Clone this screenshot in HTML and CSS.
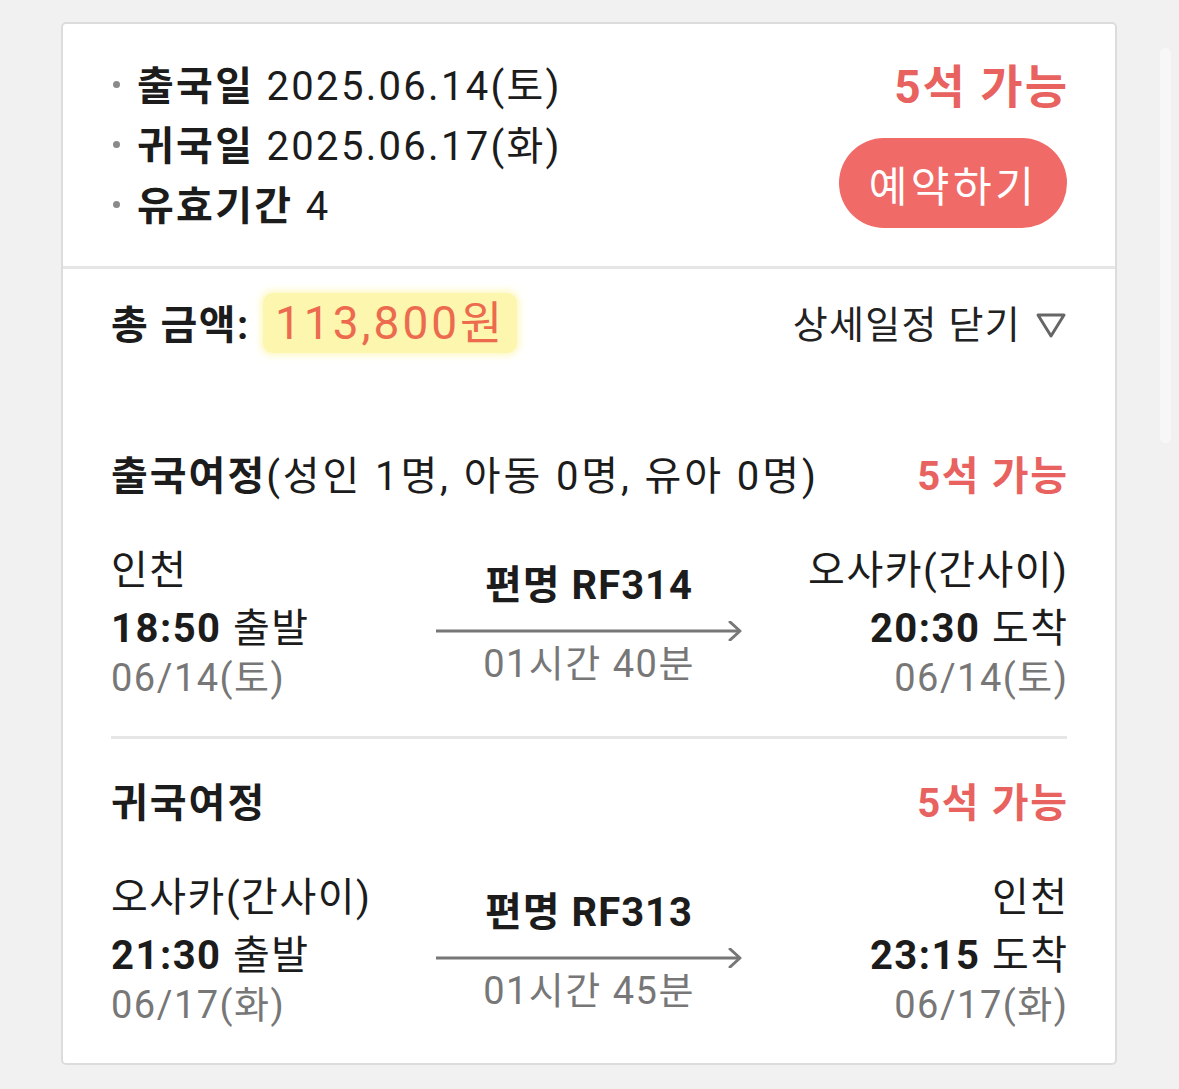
FILE: index.html
```html
<!DOCTYPE html>
<html lang="ko">
  <head>
    <meta charset="UTF-8" />
    <meta name="viewport" content="width=device-width, initial-scale=1.0" />
    <title>항공권 상세</title>
    <link rel="stylesheet" href="styles.css">
  </head>
  <body>
    <div class="scroll-hint"></div>

    <div class="card">
      <div class="summary">
        <ul class="info-list">
          <li><b>출국일</b> 2025.06.14(토)</li>
          <li><b>귀국일</b> 2025.06.17(화)</li>
          <li><b>유효기간</b> 4</li>
        </ul>
        <div class="summary-side">
          <div class="seat big">5석 가능</div>
          <button class="book-btn">예약하기</button>
        </div>
      </div>

      <div class="total-row">
        <div class="total-label">총 금액: <span class="price">113,800원</span></div>
        <div class="toggle">
          상세일정 닫기
          <svg width="32" height="28" viewBox="0 0 32 28">
            <polygon points="3,4 29,4 16,25" fill="none" stroke="#666" stroke-width="3" stroke-linejoin="round" />
          </svg>
        </div>
      </div>

      <div class="journeys">
        <div class="journey">
          <div class="journey-head">
            <h2>출국여정<span class="pax">(성인 1명, 아동 0명, 유아 0명)</span></h2>
            <div class="seat">5석 가능</div>
          </div>
          <div class="flight">
            <div class="end">
              <div class="place">인천</div>
              <div class="time"><b>18:50</b> 출발</div>
              <div class="date">06/14(토)</div>
            </div>
            <div class="mid">
              <div class="flight-no">편명 RF314</div>
              <svg class="arrow" width="306" height="20" viewBox="0 0 306 20">
                <line x1="0" y1="10" x2="304" y2="10" stroke="#777" stroke-width="3" />
                <polyline points="294,1 304,10 294,19" fill="none" stroke="#777" stroke-width="3" stroke-linecap="round" stroke-linejoin="round" />
              </svg>
              <div class="duration">01시간 40분</div>
            </div>
            <div class="end right">
              <div class="place">오사카(간사이)</div>
              <div class="time"><b>20:30</b> 도착</div>
              <div class="date">06/14(토)</div>
            </div>
          </div>
        </div>

        <div class="journey">
          <div class="journey-head">
            <h2>귀국여정</h2>
            <div class="seat">5석 가능</div>
          </div>
          <div class="flight">
            <div class="end">
              <div class="place">오사카(간사이)</div>
              <div class="time"><b>21:30</b> 출발</div>
              <div class="date">06/17(화)</div>
            </div>
            <div class="mid">
              <div class="flight-no">편명 RF313</div>
              <svg class="arrow" width="306" height="20" viewBox="0 0 306 20">
                <line x1="0" y1="10" x2="304" y2="10" stroke="#777" stroke-width="3" />
                <polyline points="294,1 304,10 294,19" fill="none" stroke="#777" stroke-width="3" stroke-linecap="round" stroke-linejoin="round" />
              </svg>
              <div class="duration">01시간 45분</div>
            </div>
            <div class="end right">
              <div class="place">인천</div>
              <div class="time"><b>23:15</b> 도착</div>
              <div class="date">06/17(화)</div>
            </div>
          </div>
        </div>
      </div>
    </div>
  </body>
</html>
```

FILE: styles.css
```css
* {
  box-sizing: border-box;
}
body {
  margin: 0;
  font-family: Roboto, "Noto Sans CJK KR", sans-serif;
  background-color: #f1f1f1;
  color: #1c1c1c;
}

.scroll-hint {
  position: absolute;
  left: 1160px;
  top: 48px;
  width: 11px;
  height: 395px;
  border-radius: 6px;
  background: #f7f7f7;
}

.card {
  width: 1056px;
  margin: 22px 0 0 61px;
  background: #fff;
  border: 2px solid #dcdcdc;
  border-radius: 5px;
}

/* top summary */
.summary {
  display: flex;
  justify-content: space-between;
  padding: 31px 48px 29px;
  border-bottom: 3px solid #e6e6e6;
}
.info-list {
  list-style: none;
  margin: 2px 0 0;
  padding: 0;
  font-size: 40px;
  line-height: 60px;
  letter-spacing: 2.3px;
}
.info-list li::before {
  content: "";
  display: inline-block;
  width: 7px;
  height: 7px;
  border-radius: 50%;
  background: #8a8a8a;
  margin: 0 17px 0 2px;
  vertical-align: 12px;
}
.summary-side {
  display: flex;
  flex-direction: column;
  align-items: flex-end;
}
.seat {
  color: #e8625f;
  font-weight: bold;
  font-size: 40px;
  line-height: 60px;
  letter-spacing: 1.6px;
  margin-right: -1.6px;
}
.seat.big {
  font-size: 46px;
  line-height: 64px;
  letter-spacing: 2px;
  margin-right: -2px;
}
.book-btn {
  margin-top: 19px;
  width: 228px;
  height: 90px;
  border: none;
  border-radius: 45px;
  background: #f06a68;
  color: #fff;
  font-family: inherit;
  font-size: 42px;
  letter-spacing: 3.5px;
}

/* total */
.total-row {
  display: flex;
  justify-content: space-between;
  align-items: center;
  padding: 24px 48px 0;
  line-height: 60px;
}
.total-label {
  font-size: 40px;
  font-weight: bold;
  letter-spacing: 1.4px;
}
.price {
  display: inline-block;
  height: 60px;
  padding: 0 12px;
  margin-left: 2px;
  font-size: 46px;
  font-weight: normal;
  letter-spacing: 3px;
  color: #ec6a4e;
  background: #fdf6ae;
  border-radius: 10px;
  box-shadow: 0 0 6px 3px rgba(253, 246, 174, 0.7);
}
.toggle {
  display: flex;
  align-items: center;
  gap: 14px;
  font-size: 38px;
  letter-spacing: 1.3px;
  color: #222;
}

/* journeys */
.journeys {
  margin-top: 56px;
  padding: 0 48px;
}
.journey {
  padding: 35px 0 34px;
}
.journey + .journey {
  border-top: 3px solid #e6e6e6;
}
.journey-head {
  display: flex;
  justify-content: space-between;
  align-items: center;
  line-height: 60px;
}
.journey-head h2 {
  margin: 0;
  font-size: 40px;
  font-weight: bold;
  letter-spacing: 2px;
}
.pax {
  font-weight: normal;
  letter-spacing: 2.9px;
}

.flight {
  display: grid;
  grid-template-columns: 1fr 306px 1fr;
  align-items: center;
  margin-top: 39px;
}
.end {
  font-size: 40px;
  letter-spacing: 1.5px;
}
.end.right {
  text-align: right;
  margin-right: -1.5px;
}
.place {
  line-height: 50px;
  margin-bottom: 8px;
}
.time {
  line-height: 50px;
}
.date {
  font-size: 38px;
  line-height: 48px;
  color: #777;
}
.mid {
  display: flex;
  flex-direction: column;
  align-items: center;
}
.flight-no {
  font-size: 40px;
  font-weight: bold;
  line-height: 50px;
  letter-spacing: 1px;
}
.arrow {
  display: block;
  margin-top: 10px;
}
.duration {
  font-size: 38px;
  line-height: 46px;
  color: #777;
  letter-spacing: 1.5px;
}
```
